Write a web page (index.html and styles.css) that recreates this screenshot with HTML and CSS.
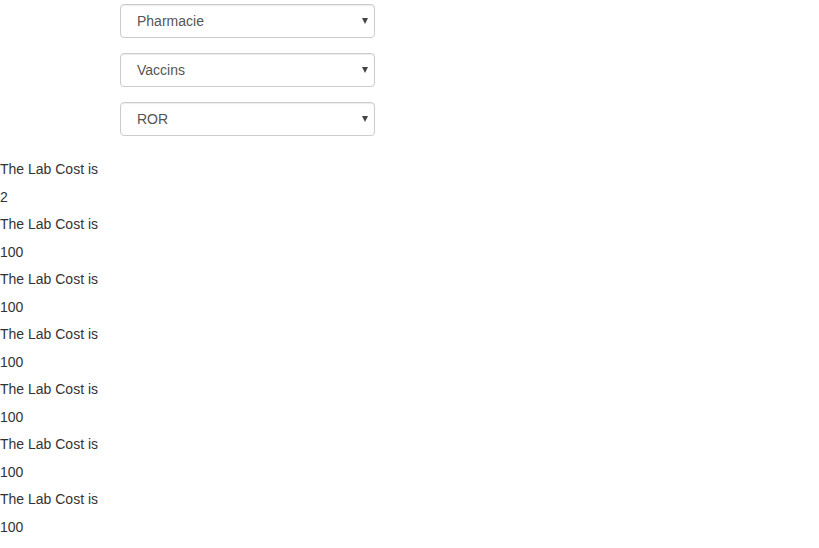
FILE: index.html
```html
<!DOCTYPE html>
<html>
<head>
<meta charset="utf-8">
<link rel="stylesheet" href="styles.css">
</head>
<body>
<div class="filters">
  <div class="select"><span class="value">Pharmacie</span><span class="caret"></span></div>
  <div class="select"><span class="value">Vaccins</span><span class="caret"></span></div>
  <div class="select"><span class="value">ROR</span><span class="caret"></span></div>
</div>
<div class="results">
  <div class="line">The Lab Cost is</div>
  <div class="line">2</div>
  <div class="line">The Lab Cost is</div>
  <div class="line">100</div>
  <div class="line">The Lab Cost is</div>
  <div class="line">100</div>
  <div class="line">The Lab Cost is</div>
  <div class="line">100</div>
  <div class="line">The Lab Cost is</div>
  <div class="line">100</div>
  <div class="line">The Lab Cost is</div>
  <div class="line">100</div>
  <div class="line">The Lab Cost is</div>
  <div class="line">100</div>
</div>
</body>
</html>
```

FILE: styles.css
```css
html, body {
  margin: 0;
  padding: 0;
  background: #ffffff;
}
body {
  font-family: "Liberation Sans", Arial, sans-serif;
  font-size: 14px;
  color: #333333;
}
.filters {
  display: flex;
  flex-direction: column;
  gap: 15px;
  padding: 4px 0 0 120px;
}
.select {
  box-sizing: border-box;
  width: 255px;
  height: 34px;
  border: 1px solid #cccccc;
  border-radius: 4px;
  box-shadow: inset 0 1px 1px rgba(0,0,0,0.075);
  display: flex;
  align-items: center;
  justify-content: space-between;
  padding: 0 6px 0 16px;
  color: #555555;
}
.caret {
  width: 0;
  height: 0;
  border-left: 3px solid transparent;
  border-right: 3px solid transparent;
  border-top: 6px solid #444444;
}
.results {
  margin-top: 20px;
}
.line {
  line-height: 27.5px;
}
```
